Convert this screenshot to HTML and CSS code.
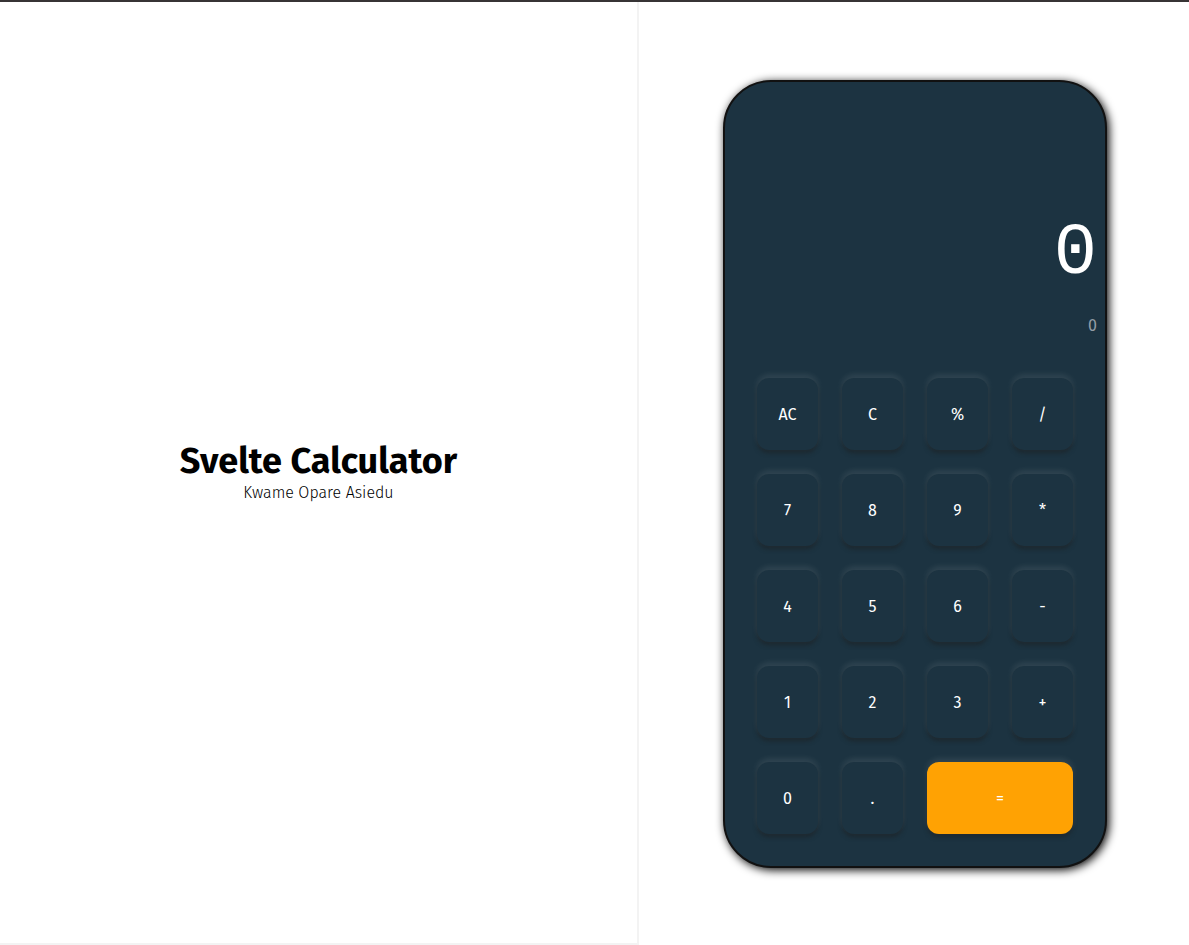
FILE: index.html
```html
<!DOCTYPE html>
<html lang="en">
<head>
<meta charset="utf-8">
<meta name="viewport" content="width=device-width, initial-scale=1">
<title>Svelte Calculator</title>
<link rel="stylesheet" href="styles.css">
</head>
<body>
<main class="app">
  <section class="intro">
    <h1 class="title">Svelte Calculator</h1>
    <p class="author">Kwame Opare Asiedu</p>
  </section>
  <section class="stage">
    <div class="phone">
      <div class="display">
        <output class="result">0</output>
        <output class="expression">0</output>
      </div>
      <div class="keys">
        <button class="key" type="button">AC</button>
        <button class="key" type="button">C</button>
        <button class="key" type="button">%</button>
        <button class="key" type="button">/</button>
        <button class="key" type="button">7</button>
        <button class="key" type="button">8</button>
        <button class="key" type="button">9</button>
        <button class="key" type="button">*</button>
        <button class="key" type="button">4</button>
        <button class="key" type="button">5</button>
        <button class="key" type="button">6</button>
        <button class="key" type="button">-</button>
        <button class="key" type="button">1</button>
        <button class="key" type="button">2</button>
        <button class="key" type="button">3</button>
        <button class="key" type="button">+</button>
        <button class="key" type="button">0</button>
        <button class="key" type="button">.</button>
        <button class="key key-equals" type="button">=</button>
      </div>
    </div>
  </section>
</main>
</body>
</html>
```
FILE: styles.css
```css
* {
  box-sizing: border-box;
}

body {
  margin: 0;
  background: #fff;
  font-family: "Fira Sans", "Noto Sans", sans-serif;
  font-size: 16px;
}

.app {
  display: grid;
  grid-template-columns: 639fr 550fr;
  min-height: 100vh;
  border-top: 2px solid #373435;
}

.intro {
  display: flex;
  flex-direction: column;
  align-items: center;
  justify-content: center;
  border-right: 2px solid #f3f3f3;
  border-bottom: 2px solid #f3f3f3;
}

.title {
  margin: 0;
  font-size: 36px;
  font-weight: 700;
  line-height: 40px;
  color: #000;
}

.author {
  margin: 0;
  font-weight: 300;
  line-height: 24px;
  color: #000;
}

.stage {
  display: flex;
  align-items: center;
  justify-content: center;
  padding: 24px 0 24px 2px;
}

.phone {
  width: 384px;
  border: 2px solid #111;
  border-radius: 48px;
  background: #1c3341;
  box-shadow: 2px 2px 10px #000;
}

.display {
  display: flex;
  flex-direction: column;
  align-items: flex-end;
  padding: 124px 8px 28px;
}

.result {
  font-family: "Liberation Mono", monospace;
  font-size: 72px;
  line-height: 96px;
  color: #fff;
}

.expression {
  margin-top: 12px;
  line-height: 24px;
  color: #949da5;
}

.keys {
  display: grid;
  grid-template-columns: repeat(4, 1fr);
  grid-auto-rows: 72px;
  gap: 24px;
  padding: 12px 32px 32px;
}

.key {
  padding: 1px 0 0;
  border: 0;
  border-radius: 12px;
  background: #1c3341;
  box-shadow: 0 -3px 6px rgba(255, 255, 255, 0.1), 0 3px 4px rgba(28, 28, 28, 0.5);
  font: inherit;
  color: #fff;
}

.key-equals {
  grid-column: span 2;
  background: #ffa203;
}
```
